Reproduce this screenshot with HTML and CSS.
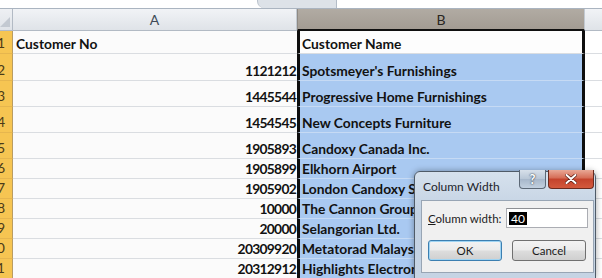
FILE: index.html
```html
<!DOCTYPE html>
<html>
<head>
    <title>Column Width</title>
    <link rel="stylesheet" href="styles.css">
</head>
<body>
    <div class="formula-strip">
        <div class="namebox"></div>
        <div class="splitter"></div>
        <div class="formula"></div>
    </div>

    <div class="sheet">
        <div class="corner">
            <svg width="10" height="10" viewBox="0 0 10 10"><polygon points="10,0 10,10 0,10" fill="#c3c9d1"/></svg>
        </div>
        <div class="col-head">A</div>
        <div class="col-head sel">B</div>
        <div class="col-head last"></div>

        <div class="rh">1</div>
        <div class="ca left">Customer No</div>
        <div class="cb active">Customer Name</div>
        <div class="cc"></div>

        <div class="rh">2</div>
        <div class="ca num">1121212</div>
        <div class="cb">Spotsmeyer's Furnishings</div>
        <div class="cc"></div>

        <div class="rh">3</div>
        <div class="ca num">1445544</div>
        <div class="cb">Progressive Home Furnishings</div>
        <div class="cc"></div>

        <div class="rh">4</div>
        <div class="ca num">1454545</div>
        <div class="cb">New Concepts Furniture</div>
        <div class="cc"></div>

        <div class="rh">5</div>
        <div class="ca num">1905893</div>
        <div class="cb">Candoxy Canada Inc.</div>
        <div class="cc"></div>

        <div class="rh">6</div>
        <div class="ca num">1905899</div>
        <div class="cb">Elkhorn Airport</div>
        <div class="cc"></div>

        <div class="rh">7</div>
        <div class="ca num">1905902</div>
        <div class="cb">London Candoxy Storage</div>
        <div class="cc"></div>

        <div class="rh">8</div>
        <div class="ca num">10000</div>
        <div class="cb">The Cannon Group Inc.</div>
        <div class="cc"></div>

        <div class="rh">9</div>
        <div class="ca num">20000</div>
        <div class="cb">Selangorian Ltd.</div>
        <div class="cc"></div>

        <div class="rh">10</div>
        <div class="ca num">20309920</div>
        <div class="cb">Metatorad Malaysia Sdn Bhd</div>
        <div class="cc"></div>

        <div class="rh">11</div>
        <div class="ca num">20312912</div>
        <div class="cb">Highlights Electronics Pte Ltd</div>
        <div class="cc"></div>
    </div>

    <div class="dialog">
        <div class="dlg-title">
            <span>Column Width</span>
            <div class="caption-btns">
                <span class="cap-help">?</span>
                <span class="cap-close">
                    <svg width="12" height="10" viewBox="0 0 12 10"><path d="M1.5 1 L10.5 9 M10.5 1 L1.5 9" stroke="#5a1a10" stroke-width="3.4" stroke-linecap="round"/><path d="M1.5 1 L10.5 9 M10.5 1 L1.5 9" stroke="#fff" stroke-width="2" stroke-linecap="round"/></svg>
                </span>
            </div>
        </div>
        <div class="dlg-body">
            <div class="dlg-row">
                <label><u>C</u>olumn width:</label>
                <div class="dlg-input"><span class="sel-text">40</span></div>
            </div>
            <div class="dlg-buttons">
                <button class="btn default">OK</button>
                <button class="btn">Cancel</button>
            </div>
        </div>
    </div>
</body>
</html>
```

FILE: styles.css
```css
* {
    box-sizing: border-box;
}

body {
    margin: 0;
    width: 602px;
    height: 278px;
    overflow: hidden;
    position: relative;
    background: #ffffff;
    font-family: Lato, "Liberation Sans", sans-serif;
}

/* bottom edge of the formula bar */
.formula-strip {
    display: flex;
    height: 9px;
    border-bottom: 1px solid #aab4c0;
}

.namebox {
    width: 257px;
    background: #ffffff;
}

.splitter {
    width: 79px;
    background: #dde2e8;
    border-left: 1px solid #b9c1cb;
    border-radius: 0 0 0 7px;
}

.formula {
    flex: 1;
    background: #ffffff;
    border-left: 1px solid #b3bcc7;
}

/* worksheet grid */
.sheet {
    display: grid;
    grid-template-columns: 13px 284px 288px 1fr;
    grid-template-rows: 22px 23px 27px 26px 26px 26px repeat(6, 20px);
}

.corner {
    display: flex;
    align-items: flex-end;
    justify-content: flex-end;
    padding: 0 2px 3px 0;
    background: linear-gradient(#eef0f3, #dfe3e8);
    border-right: 1px solid #b2bac4;
    border-bottom: 1px solid #b2bac4;
}

.col-head {
    display: flex;
    align-items: center;
    justify-content: center;
    font-size: 14px;
    color: #404a58;
    background: linear-gradient(#f1f3f6, #dfe3e8);
    border-right: 1px solid #c2c9d1;
    border-bottom: 1px solid #b2bac4;
}

.col-head.sel {
    color: #2a2622;
    background: linear-gradient(#b1aba3, #a39c93);
    border-left: 1px solid #8f8a84;
    border-bottom: 2px solid #101010;
}

.col-head.last {
    border-right: none;
}

.rh {
    display: flex;
    align-items: flex-end;
    justify-content: flex-end;
    padding: 0 7px 2px 0;
    overflow: hidden;
    white-space: nowrap;
    font-size: 14px;
    line-height: 16px;
    color: #4b3a18;
    background: #f6c552;
    border-right: 1px solid #b99c62;
    border-bottom: 1px solid #e6b64e;
}

.ca,
.cb,
.cc {
    display: flex;
    align-items: flex-end;
    padding-bottom: 1px;
    white-space: nowrap;
    overflow: hidden;
    font-size: 13.8px;
    font-weight: 700;
    line-height: 16px;
    color: #121212;
    border-bottom: 1px solid #dadde1;
}

.ca {
    justify-content: flex-end;
    padding-right: 1px;
    padding-left: 3px;
    background: #fbfbfb;
}

.ca.left {
    justify-content: flex-start;
}

.ca.num {
    letter-spacing: -0.7px;
}

.cb {
    padding-left: 2px;
    background: #a9c9f1;
    border-left: 3px solid #0e0e0e;
    border-right: 3px solid #0e0e0e;
    border-bottom-color: #c6daf4;
}

.cb.active {
    background: #fdfdfd;
    border-bottom-color: #dadde1;
}

.cc {
    background: #ffffff;
}

/* Column Width dialog */
.dialog {
    position: absolute;
    left: 414px;
    top: 171px;
    width: 182px;
    height: 108px;
    padding: 0 1px 0 6px;
    background: linear-gradient(#d6e1ed, #c2d1e2 40%, #c6d4e4);
    border: 1px solid #4f5b68;
    border-radius: 6px 6px 0 0;
    box-shadow: 0 0 6px rgba(0, 0, 0, 0.35);
}

.dlg-title {
    display: flex;
    justify-content: space-between;
    align-items: center;
    height: 28px;
    padding-left: 2px;
    font-size: 12px;
    color: #1d232b;
}

.caption-btns {
    display: flex;
    align-self: flex-start;
    gap: 2px;
    margin-top: -2px;
}

.cap-help,
.cap-close {
    display: flex;
    align-items: center;
    justify-content: center;
    height: 19px;
    border: 1px solid #5c6876;
    border-top: none;
    border-radius: 0 0 4px 4px;
}

.cap-help {
    width: 27px;
    font-size: 13px;
    font-weight: 700;
    color: #ffffff;
    text-shadow: 0 0 2px #3b4654, 0 0 1px #3b4654;
    background: linear-gradient(#d7e0ea, #b8c6d6 50%, #a7b7ca 51%, #c2d0df);
}

.cap-close {
    width: 46px;
    border-color: #6b2a1e;
    background: linear-gradient(#e9a896, #d56c55 45%, #c4432c 50%, #d3593d);
}

.dlg-body {
    height: 73px;
    padding: 7px 5px 0 6px;
    background: #f0f0f0;
    border: 1px solid #98a5b4;
    font-size: 11.5px;
    color: #1b1b1b;
}

.dlg-row {
    display: flex;
    justify-content: space-between;
    align-items: center;
    height: 20px;
}

.dlg-input {
    display: flex;
    align-items: center;
    width: 82px;
    height: 20px;
    padding-left: 2px;
    background: #ffffff;
    border: 1px solid #abadb3;
    border-top-color: #8e9094;
}

.sel-text {
    padding: 0 2px;
    line-height: 13px;
    font-size: 12px;
    color: #ffffff;
    background: #000000;
}

.dlg-buttons {
    display: flex;
    gap: 10px;
    margin-top: 12px;
}

.btn {
    width: 74px;
    height: 21px;
    padding: 0;
    font-family: Lato, "Liberation Sans", sans-serif;
    font-size: 11.5px;
    color: #1b1b1b;
    background: linear-gradient(#f3f3f3, #ebebeb 48%, #dddddd 52%, #cfcfcf);
    border: 1px solid #707070;
    border-radius: 3px;
}

.btn.default {
    border-color: #3c7fb1;
    box-shadow: inset 0 0 0 1px #9fd4f3;
}
```
